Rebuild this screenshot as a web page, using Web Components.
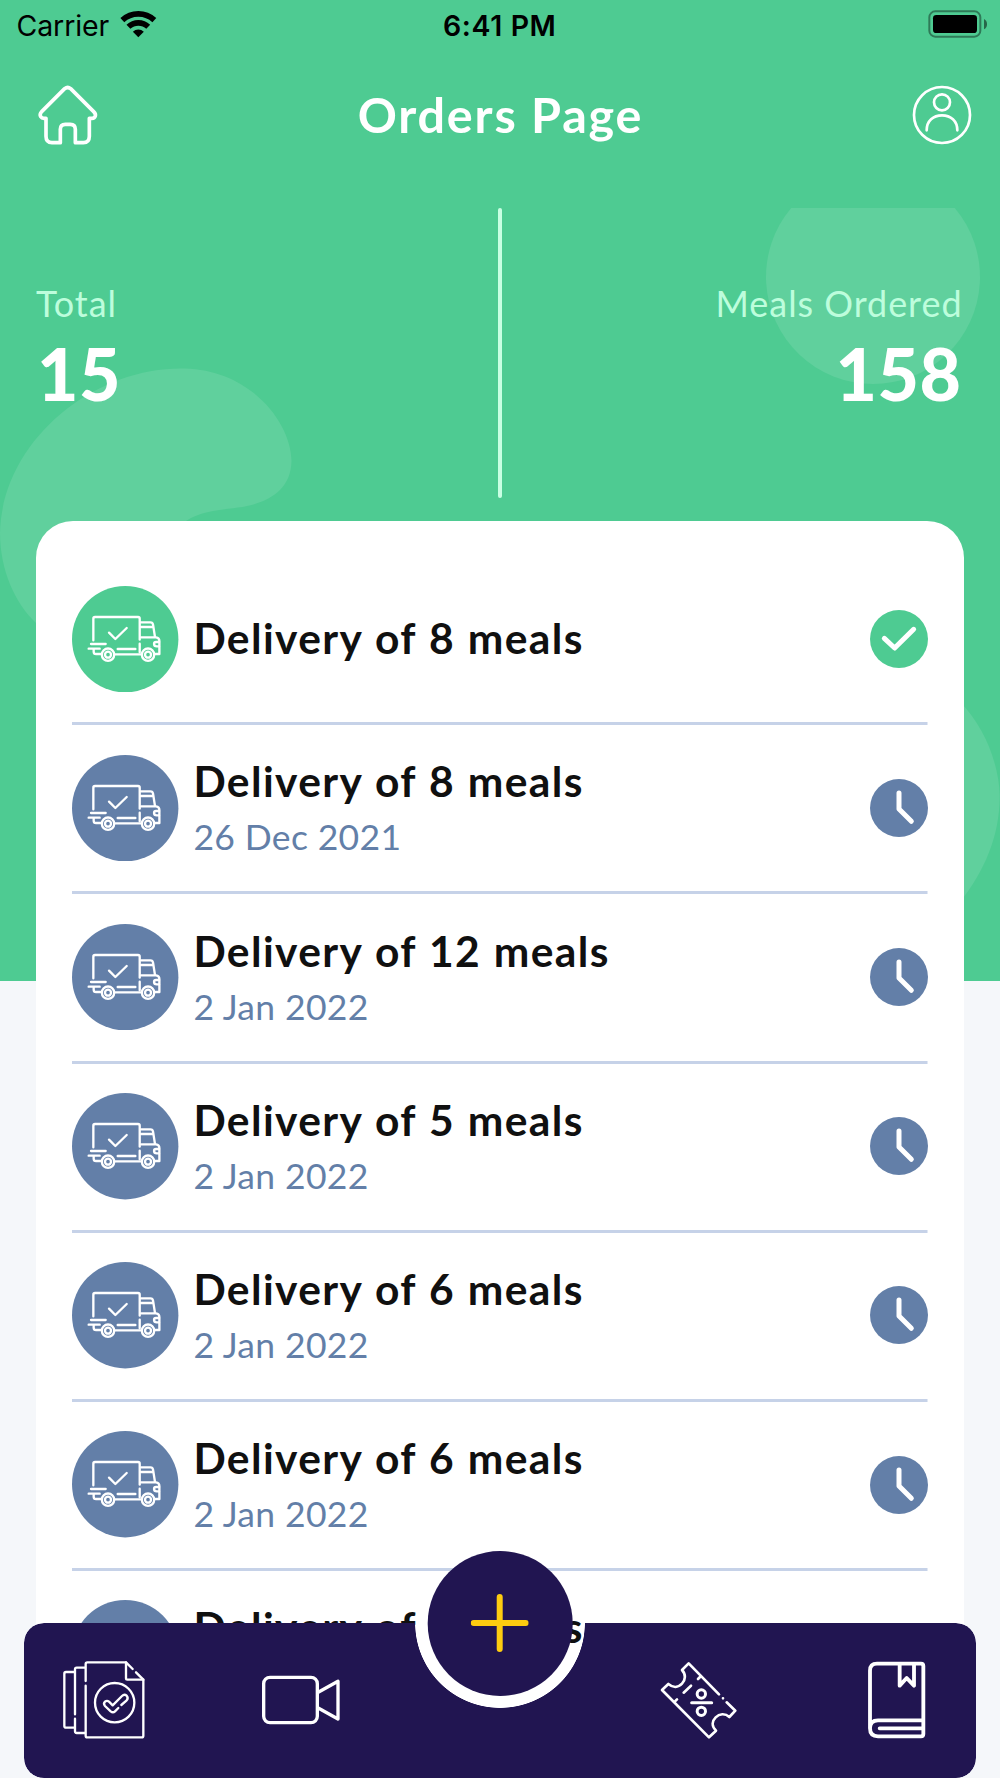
<!DOCTYPE html>
<html lang="en">
<head>
<meta charset="utf-8">
<title>Orders Page</title>
<style>
  :root {
    --color-green: #4ecb92;
    --color-mint: #bdfddc;
    --color-blue: #637fa8;
    --color-navy: #211551;
    --color-yellow: #fdcc10;
    --color-ink: #101010;
    --color-line: #c6d2e8;
    --color-page: #f5f7fa;
    --font-main: Lato, "Open Sans", sans-serif;
    --font-system: Inter, Roboto, sans-serif;
  }

  body {
    margin: 0;
    font-family: var(--font-main);
  }
</style>
</head>
<body>
<orders-app>
  <status-bar slot="status" carrier="Carrier" time="6:41 PM"></status-bar>
  <page-header slot="header">Orders Page</page-header>
  <order-stats slot="stats">
    <order-stat label="Total" value="15"></order-stat>
    <order-stat label="Meals Ordered" value="158" align="end"></order-stat>
  </order-stats>
  <order-row title-text="Delivery of 8 meals" done></order-row>
  <order-row title-text="Delivery of 8 meals" date="26 Dec 2021"></order-row>
  <order-row title-text="Delivery of 12 meals" date="2 Jan 2022"></order-row>
  <order-row title-text="Delivery of 5 meals" date="2 Jan 2022"></order-row>
  <order-row title-text="Delivery of 6 meals" date="2 Jan 2022"></order-row>
  <order-row title-text="Delivery of 6 meals" date="2 Jan 2022"></order-row>
  <order-row title-text="Delivery of 6 meals" date="2 Jan 2022"></order-row>
  <tab-bar slot="tabs"></tab-bar>
</orders-app>

<script>
class OrdersApp extends HTMLElement {
  constructor() {
    super();
    this.attachShadow({ mode: 'open' });
  }

  connectedCallback() {
    this.shadowRoot.innerHTML = `
      <style>
        :host {
          display: flex;
          flex-direction: column;
          position: relative;
          height: 1778px;
          overflow: hidden;
          background: linear-gradient(var(--color-green) 980.6px, var(--color-page) 980.6px);
        }

        .shapes {
          position: absolute;
          inset: 0;
          fill: #fff;
          fill-opacity: 0.1;
        }

        .card {
          position: relative;
          flex: none;
          margin: 0 36.3px;
          padding: 35px 36.2px 0;
          background: #fff;
          border-radius: 37px 37px 0 0;
        }

        .tabs {
          position: absolute;
          left: 24.3px;
          right: 24.3px;
          bottom: 0;
        }
      </style>
      <svg class="shapes" width="1000" height="1778" viewBox="0 0 1000 1778">
        <path d="M791.200 208 A107 107 0 1 0 954.800 208 Z"/>
        <path d="M36 623 C15 603 0 570 0 533 C2 440 95 366 185 368.500 C250 370 291 422 291.500 461 C291 492 265 504 238 507.500 C215 510.500 200 512 186 521 V640 H36 Z"/>
        <path d="M960 702 C985 727 999 765 999.700 795 C1000 835 985 870 960 902 Z"/>
      </svg>
      <slot name="status"></slot>
      <slot name="header"></slot>
      <slot name="stats"></slot>
      <div class="card"><slot></slot></div>
      <div class="tabs"><slot name="tabs"></slot></div>
    `;
  }
}

class StatusBar extends HTMLElement {
  constructor() {
    super();
    this.attachShadow({ mode: 'open' });
  }

  connectedCallback() {
    this.shadowRoot.innerHTML = `
      <style>
        :host {
          display: grid;
          grid-template-columns: 1fr auto 1fr;
          align-items: center;
          position: relative;
          height: 51px;
          padding: 0 12.5px 0 12px;
          box-sizing: border-box;
          color: #000;
          font: 400 28.5px/51px var(--font-system);
        }

        .left {
          display: flex;
          align-items: center;
          gap: 11px;
          padding-left: 4.5px;
        }

        .carrier {
          letter-spacing: -0.1px;
        }

        .time {
          font-weight: 600;
          letter-spacing: 0.6px;
        }

        svg {
          display: block;
        }

        .left svg {
          margin-bottom: 4px;
        }

        .battery {
          justify-self: end;
          margin-bottom: 3px;
        }
      </style>
      <div class="left">
        <span class="carrier">${this.getAttribute('carrier')}</span>
        <svg width="37" height="28" viewBox="360 28 111 84" fill="none" stroke="#000" stroke-width="17">
          <path d="M367 58.400 A70.500 70.500 0 0 1 463 58.400"/>
          <path d="M385.300 78.200 A43.500 43.500 0 0 1 444.700 78.200"/>
          <path d="M415 110 L398.600 93 A24 24 0 0 1 431.400 93 Z" fill="#000" stroke="none"/>
        </svg>
      </div>
      <span class="time">${this.getAttribute('time')}</span>
      <svg class="battery" width="60" height="28" viewBox="1284 30 180 84">
        <rect x="1288" y="34" width="153" height="76" rx="18" fill="none" stroke="#000" stroke-opacity="0.4" stroke-width="6"/>
        <rect x="1299" y="45" width="132" height="54" rx="10"/>
        <path d="M1452 57 Q1461 62 1461 72.500 Q1461 83 1452 88 Z" fill-opacity="0.5"/>
      </svg>
    `;
  }
}

class PageHeader extends HTMLElement {
  constructor() {
    super();
    this.attachShadow({ mode: 'open' });
  }

  connectedCallback() {
    this.shadowRoot.innerHTML = `
      <style>
        :host {
          display: flex;
          align-items: center;
          justify-content: space-between;
          position: relative;
          height: 128px;
          padding: 0 26px 0 36px;
          color: #fff;
        }

        h1 {
          margin: 0 9px 2px 0;
          font-size: 48.5px;
          font-weight: 700;
          line-height: 58px;
          letter-spacing: 1.8px;
        }

        svg {
          display: block;
          fill: none;
          stroke: #fff;
        }
      </style>
      <svg width="64" height="64" viewBox="108 249 192 192" stroke-width="11" stroke-linecap="round" stroke-linejoin="round">
        <path d="M194 266 L125 335 Q118 343 122 350 Q125 355 132 355 H138 V409 Q138 428 156 428 H181 V388 Q181 373 196 373 H211 Q226 373 226 388 V428 H250 Q268 428 268 409 V355 H276 Q284 355 286 348 Q288 342 281 335 L212 266 Q203 259 194 266 Z"/>
      </svg>
      <h1><slot></slot></h1>
      <svg width="64" height="64" viewBox="1230 249 192 192" stroke-width="8" stroke-linecap="round">
        <circle cx="1326" cy="345" r="84"/>
        <circle cx="1326" cy="307" r="24"/>
        <path d="M1280 391 C1280 362 1300 346 1326 346 S1372 362 1372 391"/>
      </svg>
    `;
  }
}

class OrderStats extends HTMLElement {
  constructor() {
    super();
    this.attachShadow({ mode: 'open' });
  }

  connectedCallback() {
    this.shadowRoot.innerHTML = `
      <style>
        :host {
          display: grid;
          grid-template-columns: 1fr 1fr;
          position: relative;
          height: 342.3px;
          padding: 0 37.5px 0 36px;
          box-sizing: border-box;
        }

        .divider {
          position: absolute;
          left: 498px;
          top: 29px;
          width: 4px;
          height: 290px;
          border-radius: 2px;
          background: #c9ffe3;
        }
      </style>
      <slot></slot>
      <div class="divider"></div>
    `;
  }
}

class OrderStat extends HTMLElement {
  constructor() {
    super();
    this.attachShadow({ mode: 'open' });
  }

  connectedCallback() {
    this.shadowRoot.innerHTML = `
      <style>
        :host {
          display: flex;
          flex-direction: column;
          align-items: flex-start;
          padding-top: 101.5px;
        }

        :host([align="end"]) {
          align-items: flex-end;
        }

        .label {
          color: var(--color-mint);
          font-size: 36px;
          line-height: 44px;
          letter-spacing: 0.95px;
        }

        .value {
          margin: 5px 1px 0;
          color: #fff;
          font-size: 71.5px;
          font-weight: 900;
          line-height: 86px;
          letter-spacing: 0.5px;
        }
      </style>
      <span class="label">${this.getAttribute('label')}</span>
      <span class="value">${this.getAttribute('value')}</span>
    `;
  }
}

class OrderRow extends HTMLElement {
  constructor() {
    super();
    this.attachShadow({ mode: 'open' });
  }

  connectedCallback() {
    const date = this.getAttribute('date');
    const mark = this.hasAttribute('done')
      ? 'M43 85 L74 114 L131 58'
      : 'M87 42 V90 L124 127';

    this.shadowRoot.innerHTML = `
      <style>
        :host {
          --tone: var(--color-blue);
          display: flex;
          align-items: center;
          height: 169.1px;
          box-sizing: border-box;
          background: linear-gradient(var(--color-line), var(--color-line)) bottom / 100% 3px no-repeat;
        }

        :host([done]) {
          --tone: var(--color-green);
        }

        svg {
          display: block;
          flex: none;
          margin-bottom: 3.5px;
          fill: none;
          stroke: #fff;
          stroke-linecap: round;
          stroke-linejoin: round;
        }

        .disc {
          fill: var(--tone);
          stroke: none;
        }

        .text {
          display: flex;
          flex: 1;
          flex-direction: column;
          gap: 9px;
          padding: 0 0 5px 14.5px;
        }

        .title {
          color: var(--color-ink);
          font-size: 42.5px;
          font-weight: 700;
          line-height: 50px;
          letter-spacing: 1.4px;
          word-spacing: 1px;
        }

        .date {
          color: var(--color-blue);
          font-size: 35.5px;
          line-height: 43px;
          letter-spacing: 0.35px;
        }
      </style>
      <svg width="106.400" height="106.400" viewBox="38 51 319 319" stroke-width="7">
        <circle class="disc" cx="197.500" cy="210.500" r="159.500"/>
        <path d="M102 214 V149 Q102 144 107 144 H236 Q241 144 241 149 V212 M241 224 V250"/>
        <path d="M245 160 H273 Q280 160 281 167 L287 205 M245 174 H281 M245 205 H290 Q300 206 300 216 V255 H288"/>
        <path d="M299 219 H290 Q284 219 284 225 Q284 232 292 232 H299"/>
        <path d="M95 225 H139 M88 239 H121 M103 241 V248 Q103 255 110 255 H124 M175 240 H228 M167 256 H246"/>
        <circle cx="146" cy="257" r="18.500"/>
        <circle cx="146" cy="257" r="9"/>
        <circle cx="266" cy="257" r="18.500"/>
        <circle cx="266" cy="257" r="9"/>
        <path d="M149 191 L168 210 L202 177"/>
      </svg>
      <div class="text">
        <span class="title">${this.getAttribute('title-text')}</span>
        ${date ? `<span class="date">${date}</span>` : ''}
      </div>
      <svg width="58" height="58" viewBox="0 0 174 174" stroke-width="15">
        <circle class="disc" cx="87" cy="87" r="87"/>
        <path d="${mark}"/>
      </svg>
    `;
  }
}

class TabBar extends HTMLElement {
  constructor() {
    super();
    this.attachShadow({ mode: 'open' });
  }

  connectedCallback() {
    this.shadowRoot.innerHTML = `
      <style>
        :host {
          display: block;
          position: relative;
        }

        /* the notch leaves the list visible around the add button */
        nav {
          display: flex;
          align-items: center;
          justify-content: space-between;
          height: 155px;
          padding: 0 37.4px 2px;
          box-sizing: border-box;
          background: var(--color-navy);
          border-radius: 20px;
          -webkit-mask: radial-gradient(circle at 50% 0, transparent 84.5px, #000 85.2px);
          mask: radial-gradient(circle at 50% 0, transparent 84.5px, #000 85.2px);
        }

        svg {
          display: block;
          fill: none;
          stroke: #fff;
          stroke-linecap: round;
          stroke-linejoin: round;
        }

        .spacer {
          width: 84px;
        }

        .add {
          position: absolute;
          left: 50%;
          top: -72px;
          width: 144.6px;
          height: 144.6px;
          display: grid;
          place-items: center;
          transform: translateX(-50%);
          background: var(--color-navy);
          border-radius: 50%;
        }

        .add svg {
          stroke: var(--color-yellow);
        }
      </style>
      <nav>
        <svg width="84" height="84" viewBox="125 174 252 252" stroke-width="7">
          <path d="M162 216 H137 Q132 216 132 221 V378 Q132 383 137 383 H162"/>
          <path d="M164 343 V208 Q164 203 169 203 H194 M164 356 V394 Q164 399 169 399 H194"/>
          <path d="M196 243 V192 Q196 187 201 187 H317 L337 207 M347 217 L369 239 V407 Q369 412 364 412 H201 Q196 412 196 407 V257"/>
          <path d="M317 187 V235 Q317 239 321 239 H369"/>
          <circle cx="283" cy="308" r="59"/>
          <path d="M294 324 L284 334 Q278 340 271 334 L254 318 Q248 311 254 305 Q260 300 266 305 L277 316 L305 288 Q312 281 319 287 Q325 294 319 301 L303 315"/>
        </svg>
        <svg width="84" height="84" viewBox="721 174 252 252" stroke-width="10">
          <rect x="732" y="232" width="161" height="136" rx="19"/>
          <path d="M897 276 L955 244 V357 L897 325"/>
        </svg>
        <div class="spacer"></div>
        <svg width="84" height="84" viewBox="109 174 252 252" stroke-width="8">
          <path d="M321 307 L347 332 L329 351 C316 339 299 341 288 352 C277 363 275 378 289 392 L268 412 L127 270 L146 252 C160 264 176 263 187 251 C198 240 199 223 187 210 L207 190 L298 283"/>
          <path d="M310 295 V295.100 M241 231 L235 237 M172 298 L166 304 M192 278 L214 257"/>
          <g stroke-width="9">
            <circle cx="245" cy="282" r="12.500"/>
            <circle cx="245" cy="334" r="12.500"/>
            <path d="M216 308 H276"/>
          </g>
        </svg>
        <svg width="84" height="84" viewBox="704 174 252 252" stroke-width="11.500">
          <path d="M752 385 V212 Q752 191 773 191 H905 Q912 191 912 198 V402 Q912 409 905 409 H776 Q752 409 752 385 Q752 361 776 361 H910 M781 385 H908"/>
          <path d="M841 194 V257 L862 234 L884 257 V194"/>
        </svg>
      </nav>
      <div class="add">
        <svg width="58" height="58" viewBox="0 0 58 58" stroke-width="6">
          <path d="M29 3 V55 M3 29 H55"/>
        </svg>
      </div>
    `;
  }
}

customElements.define('orders-app', OrdersApp);
customElements.define('status-bar', StatusBar);
customElements.define('page-header', PageHeader);
customElements.define('order-stats', OrderStats);
customElements.define('order-stat', OrderStat);
customElements.define('order-row', OrderRow);
customElements.define('tab-bar', TabBar);
</script>
</body>
</html>
